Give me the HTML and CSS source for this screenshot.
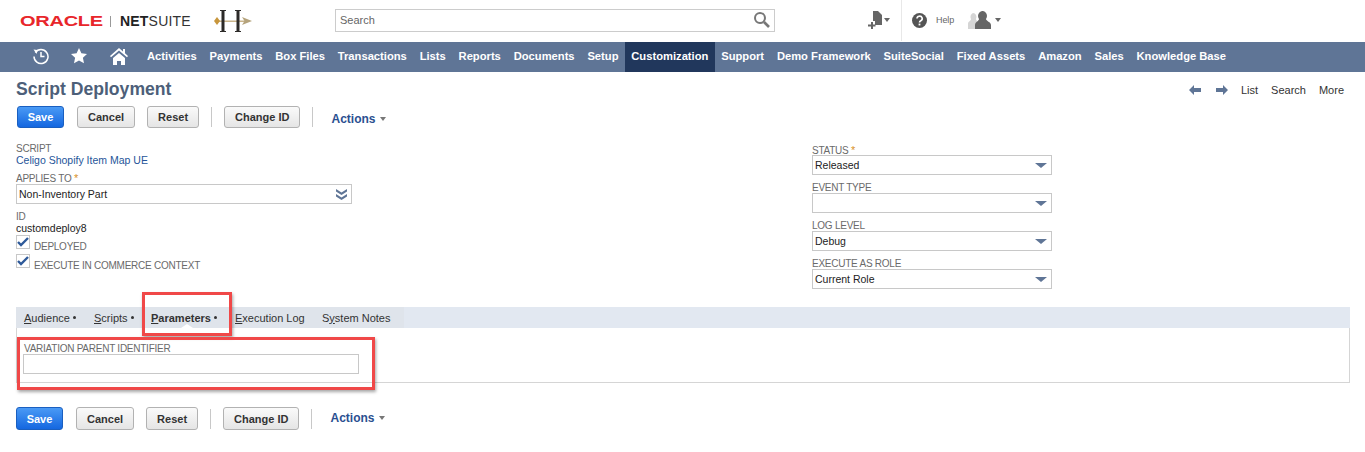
FILE: index.html
```html
<!DOCTYPE html>
<html lang="en">
<head>
<meta charset="utf-8">
<title>Script Deployment</title>
<link rel="stylesheet" href="styles.css">
</head>
<body>
<header class="top">
  <div class="logo"><span class="oracle">ORACLE</span><span class="logo-sep"></span><span class="netsuite"><b>NET</b>SUITE</span></div>
  <svg class="brand" width="40" height="26" viewBox="0 0 40 26"><rect x="4" y="11.500" width="28" height="1.500" fill="#c9b48a"/><path d="M0 12l3-4 3 4-3 4z" fill="#c8963c"/><path d="M28 8l10 4-10 4 2.500-4z" fill="#b5a37c"/><path d="M6 1h6v1h-1.500v20H12v1H6v-1h1.500V2H6zM21 1h6v1h-1.500v20H27v1h-6v-1h1.500V2H21z" fill="#2c2a28"/></svg>
  <div class="search"><span>Search</span><svg width="18" height="18" viewBox="0 0 18 18"><circle cx="7" cy="7" r="5" fill="none" stroke="#777" stroke-width="2"/><path d="M11 11l5 5" stroke="#777" stroke-width="2.600"/></svg></div>
  <div class="tools">
    <svg class="t-new" width="15" height="19" viewBox="0 0 15 19"><path d="M5 0h5l4 4v10H7v-4H5z" fill="#666"/><path d="M3 11h2v2.500h2.500v2H5V18H3v-2.500H0v-2h3z" fill="#666"/></svg><i class="caret"></i>
    <span class="t-sep"></span>
    <svg class="t-help" width="15" height="15" viewBox="0 0 15 15"><circle cx="7.500" cy="7.500" r="7.500" fill="#555"/><path d="M5 5.600a2.600 2.400 0 1 1 3.800 2.100c-.9.500-1.300.9-1.300 1.800" fill="none" stroke="#fff" stroke-width="1.600"/><rect x="6.600" y="10.600" width="1.800" height="1.800" fill="#fff"/></svg>
    <span class="t-label">Help</span>
    <svg class="t-user" width="23" height="18" viewBox="0 0 23 18"><path d="M5 2a3.500 4 0 0 1 3 6c0 2 3 2 3 5v5H0v-5c0-3 3-3 3-5a3.500 4 0 0 1 2-6z" fill="#d5d5d5"/><path d="M14 0a4.500 5 0 0 1 4 8c0 2 5 3 5 6v4H7v-4c0-3 4-4 4-6a4.500 5 0 0 1 3-8z" fill="#666"/></svg><i class="caret"></i>
  </div>
</header>
<nav class="nav">
  <span class="nav-icon n1"><svg width="18" height="18" viewBox="0 0 18 18"><path d="M3.300 5.500A7 7 0 1 1 2 9.500" fill="none" stroke="#fff" stroke-width="1.500"/><path d="M1.500 2.500l4 .5-.8 4z" fill="#fff"/><path d="M9 5v4.500h3.500" fill="none" stroke="#fff" stroke-width="1.500"/></svg></span>
  <span class="nav-icon n2"><svg width="16" height="16" viewBox="0 0 16 16"><path d="M8 0l2.400 5.200 5.600.7-4.100 3.800 1.100 5.600L8 12.500l-5 2.800 1.100-5.600L0 5.900l5.600-.7z" fill="#fff"/></svg></span>
  <span class="nav-icon n3"><svg width="18" height="17" viewBox="0 0 18 17"><path d="M9 0L0 8l1 1.300L9 2.500l8 6.800L18 8l-3-2.700V1h-2v2.500z" fill="#fff"/><path d="M3 10l6-5 6 5v7h-4v-4H7v4H3z" fill="#fff"/></svg></span>
  <a>Activities</a><a>Payments</a><a>Box Files</a><a>Transactions</a><a>Lists</a><a>Reports</a><a>Documents</a><a>Setup</a><a class="active">Customization</a><a>Support</a><a>Demo Framework</a><a>SuiteSocial</a><a>Fixed Assets</a><a>Amazon</a><a>Sales</a><a>Knowledge Base</a>
</nav>
<main class="page">
  <div class="title-row">
    <h1>Script Deployment</h1>
    <div class="pager">
      <svg width="12" height="10" viewBox="0 0 12 10"><path d="M5 0v3h7v4H5v3L0 5z" fill="#5f7596"/></svg>
      <svg class="next" width="12" height="10" viewBox="0 0 12 10"><path d="M7 0v3H0v4h7v3l5-5z" fill="#5f7596"/></svg>
      <a class="first">List</a><a>Search</a><a>More</a>
    </div>
  </div>
  <div class="buttons">
    <button class="btn primary">Save</button><button class="btn">Cancel</button><button class="btn">Reset</button><span class="bsep"></span><button class="btn">Change ID</button><span class="bsep"></span><span class="actions">Actions<i class="caret blue"></i></span>
  </div>
  <section class="form">
    <div class="col-left">
      <div class="label l-script">SCRIPT</div>
      <a class="link">Celigo Shopify Item Map UE</a>
      <div class="label l-applies">APPLIES TO <em>*</em></div>
      <div class="select wide"><span>Non-Inventory Part</span><svg width="11" height="11" viewBox="0 0 11 11"><path d="M0 0l5.500 3.500L11 0v2.500L5.500 6 0 2.500zM0 5l5.500 3.500L11 5v2.500L5.500 11 0 7.500z" fill="#5f7596"/></svg></div>
      <div class="label l-id">ID</div>
      <div class="value">customdeploy8</div>
      <div class="check"><span class="box"><svg width="12" height="10" viewBox="0 0 12 10"><path d="M1 5l3 3 7-7" fill="none" stroke="#2f5a9a" stroke-width="2.400"/></svg></span><span class="label">DEPLOYED</span></div>
      <div class="check"><span class="box"><svg width="12" height="10" viewBox="0 0 12 10"><path d="M1 5l3 3 7-7" fill="none" stroke="#2f5a9a" stroke-width="2.400"/></svg></span><span class="label">EXECUTE IN COMMERCE CONTEXT</span></div>
    </div>
    <div class="col-right">
      <div class="label">STATUS <em>*</em></div>
      <div class="select"><span>Released</span><i class="tri"></i></div>
      <div class="label">EVENT TYPE</div>
      <div class="select"><span></span><i class="tri"></i></div>
      <div class="label">LOG LEVEL</div>
      <div class="select"><span>Debug</span><i class="tri"></i></div>
      <div class="label">EXECUTE AS ROLE</div>
      <div class="select"><span>Current Role</span><i class="tri"></i></div>
    </div>
  </section>
  <section class="tabs-wrap">
    <div class="tabs">
      <div class="tab-list">
        <a class="tab t1"><u>A</u>udience<i class="dot"></i></a>
        <a class="tab t2"><u>S</u>cripts<i class="dot"></i></a>
        <a class="tab t3"><u>P</u>arameters<i class="dot"></i></a>
        <a class="tab t4"><u>E</u>xecution Log</a>
        <a class="tab t5">S<u>y</u>stem Notes</a>
      </div>
    </div>
    <div class="tab-body">
      <div class="label">VARIATION PARENT IDENTIFIER</div>
      <div class="input"></div>
    </div>
    <span class="mark mark-tab"></span>
    <span class="mark mark-field"></span>
  </section>
  <div class="buttons bottom">
    <button class="btn primary">Save</button><button class="btn">Cancel</button><button class="btn">Reset</button><span class="bsep"></span><button class="btn">Change ID</button><span class="bsep"></span><span class="actions">Actions<i class="caret blue"></i></span>
  </div>
</main>
</body>
</html>
```
FILE: styles.css
```css
* { box-sizing: border-box; }
html, body { margin: 0; padding: 0; }
body { background: #fff; font-family: "Liberation Sans", Arial, sans-serif; font-size: 10.500px; color: #222; height: 452px; overflow: hidden; }

.top { height: 42px; display: flex; align-items: center; position: relative; }
.logo { display: flex; align-items: center; margin-left: 20px; width: 171px; }
.oracle { color: #e8262b; font-weight: 700; font-size: 14.500px; transform: scaleX(1.380); transform-origin: left; width: 90px; letter-spacing: -.2px; }
.logo-sep { width: 1px; height: 11px; background: #999; margin: 0 9px 0 0; }
.netsuite { font-size: 14px; color: #333; letter-spacing: .2px; }
.netsuite b { color: #222; }
.brand { margin-left: 23px; margin-top: 1px; }
.search { margin-left: 81px; width: 440px; height: 23px; border: 1px solid #ccc; display: flex; align-items: center; justify-content: space-between; padding: 0 3px 0 4px; font-size: 11px; color: #666; margin-top: -2px; }
.tools { display: flex; align-items: center; margin-left: 93px; margin-top: -2px; }
.caret { display: inline-block; width: 0; height: 0; border: 3px solid transparent; border-top: 4px solid #666; border-bottom: 0; margin-left: 1px; }
.t-sep { width: 1px; height: 41px; background: #e8e8e8; margin: 0 10px 0 11px; }
.t-label { font-size: 9px; color: #666; margin: 0 14px 0 9px; letter-spacing: -.1px; }
.t-user { margin-right: 3px; }

.nav { height: 30px; background: #5f7596; display: flex; align-items: stretch; color: #fff; font-weight: 700; font-size: 11.200px; padding: 0 0 2px 32px; }
.nav-icon { display: flex; align-items: center; width: 18px; }
.nav-icon.n1 { margin-right: 21px; }
.nav-icon.n2 { margin-right: 21px; }
.nav-icon.n3 { margin-right: 12.600px; }
.nav a { display: flex; align-items: center; padding: 0 6.420px; white-space: nowrap; }
.nav a.active { background: #21375c; margin-bottom: -2px; padding-bottom: 2px; }

.page { padding: 0 16px; }
.title-row { display: flex; justify-content: space-between; height: 34px; align-items: center; }
h1 { margin: 0; font-size: 17.600px; font-weight: 700; color: #4d5f79; }
.pager { display: flex; align-items: center; font-size: 11px; color: #333; margin-right: 5px; position: relative; top: 1px; }
.pager .next { margin-left: 15px; }
.pager a { margin-left: 13px; }
.pager a.first { margin-left: 13px; }

.buttons { display: flex; align-items: center; height: 22px; padding-left: 1px; }
.btn { height: 22px; margin: 0 12px 0 0; border: 1px solid #b2b2b2; border-radius: 3px; background: linear-gradient(#fafafa, #e5e5e5); font: 700 11px "Liberation Sans", Arial, sans-serif; color: #333; min-width: 52px; padding: 0 10px; }
.btn.primary { background: linear-gradient(#4a9af5, #1467e0); border-color: #1a5fc0; color: #fff; width: 47px; min-width: 47px; padding: 0; margin-right: 13px; }
.bsep { width: 1px; height: 20px; background: #c8c8c8; margin-right: 12px; }
.actions { font-size: 12px; font-weight: 700; color: #2a5090; margin-left: 6px; display: flex; align-items: center; margin-top: 4px; }
.caret.blue { border-top-color: #777; margin-left: 4px; }
.bottom { margin-top: 24px; padding-left: 0; height: 23px; }
.bottom .btn { height: 23px; }
.bottom .actions { margin-top: -2px; }

.form { display: flex; height: 179px; padding-top: 15px; }
.col-left { width: 796px; }
.col-right { width: 240px; }
.label { font-size: 10px; letter-spacing: -.25px; color: #6a6a6a; line-height: 11px; }
.label em { font-style: normal; color: #d9922a; font-size: 11px; }
.link { display: block; color: #255599; font-size: 10.500px; line-height: 13px; }
.l-applies { margin-top: 6px; height: 11px; }
.l-id { margin-top: 7px; }
.value { font-size: 10.500px; line-height: 12px; color: #222; }
.select { width: 240px; height: 20px; border: 1px solid #c8c8c8; display: flex; align-items: center; justify-content: space-between; padding: 0 4px 0 2px; font-size: 10.500px; color: #222; margin-bottom: 6px; }
.select.wide { width: 336px; margin-bottom: 0; }
.col-right .label { line-height: 14px; height: 12px; }
.tri { width: 0; height: 0; border: 6px solid transparent; border-top: 5px solid #5f7596; border-bottom: 0; }
.check { display: flex; align-items: flex-end; height: 19px; }
.check .box { width: 14px; height: 14px; border: 1px solid #c8c8c8; display: flex; align-items: center; justify-content: center; margin-right: 4px; margin-bottom: 4px; }
.check .label { line-height: 12px; }

.tabs-wrap { position: relative; width: 1334px; }
.tabs { height: 21px; background: #e2e8f1; }
.tab-list { display: flex; height: 21px; background: #dfe4eb; width: 388px; align-items: center; padding-left: 8px; }
.tab { font-size: 11px; color: #333; white-space: nowrap; display: flex; align-items: center; }
.dot { width: 3px; height: 3px; border-radius: 50%; background: #333; margin-left: 3px; }
.t1 { width: 70px; }
.t2 { width: 57px; }
.t3 { width: 84px; font-weight: 700; position: relative; height: 21px; }
.t3::after { content: ""; position: absolute; left: 30px; bottom: 0; border: 6px solid transparent; border-bottom: 4px solid #fff; border-top: 0; }
.t4 { width: 87px; }
.tab-body { height: 55px; border: 1px solid #d5d5d5; border-top: 0; padding: 15px 0 0 6px; }
.tab-body .label { line-height: 11px; padding-left: 1px; }
.input { width: 336px; height: 20px; border: 1px solid #c8c8c8; }
.mark { position: absolute; border: 3px solid #f04848; box-shadow: 1px 2px 3px rgba(0,0,0,.35); pointer-events: none; }
.mark-tab { left: 126px; top: -15px; width: 90px; height: 44px; }
.mark-field { left: 1px; top: 30px; width: 358px; height: 53px; }
```
